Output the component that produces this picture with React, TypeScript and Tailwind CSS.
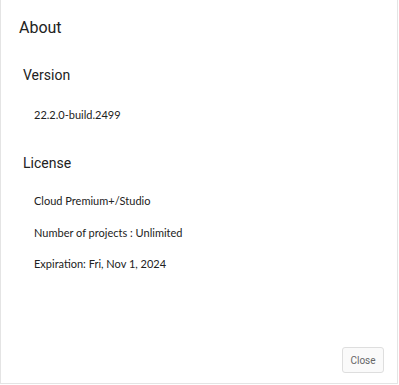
export default function App() {
  const licenseRows = [
    "Cloud Premium+/Studio",
    "Number of projects : Unlimited",
    "Expiration: Fri, Nov 1, 2024",
  ];

  return (
    <div className="w-[399px] h-[385px] bg-white">
      <div className="flex flex-col w-[398px] h-[384px] border-r border-b border-l border-[#e4e4e4] font-['Roboto',sans-serif] text-[#222]">
        {/* Title */}
        <h2 className="pl-[18px] pt-[18px] text-[16px] leading-[20px]">About</h2>

        {/* Version */}
        <h3 className="pl-[22px] mt-[28px] text-[14px] leading-[18px]">Version</h3>
        <p className="pl-[33px] mt-[24px] text-[11px] leading-[14px] font-['Lato',sans-serif]">
          22.2.0-build.2499
        </p>

        {/* License */}
        <h3 className="pl-[22px] mt-[32px] text-[14px] leading-[18px]">License</h3>
        <div className="flex flex-col gap-[17.5px] pl-[33px] mt-[22px] text-[11px] leading-[14px] font-['Lato',sans-serif]">
          {licenseRows.map((row) => (
            <p key={row}>{row}</p>
          ))}
        </div>

        {/* Footer */}
        <div className="flex justify-end mt-auto pr-[13px] pb-[10px]">
          <button className="w-[42px] h-[26px] border border-[#dedede] rounded-[3px] bg-[#fafafa] text-[10px] text-[#666] font-['Roboto',sans-serif]">
            Close
          </button>
        </div>
      </div>
    </div>
  );
}
